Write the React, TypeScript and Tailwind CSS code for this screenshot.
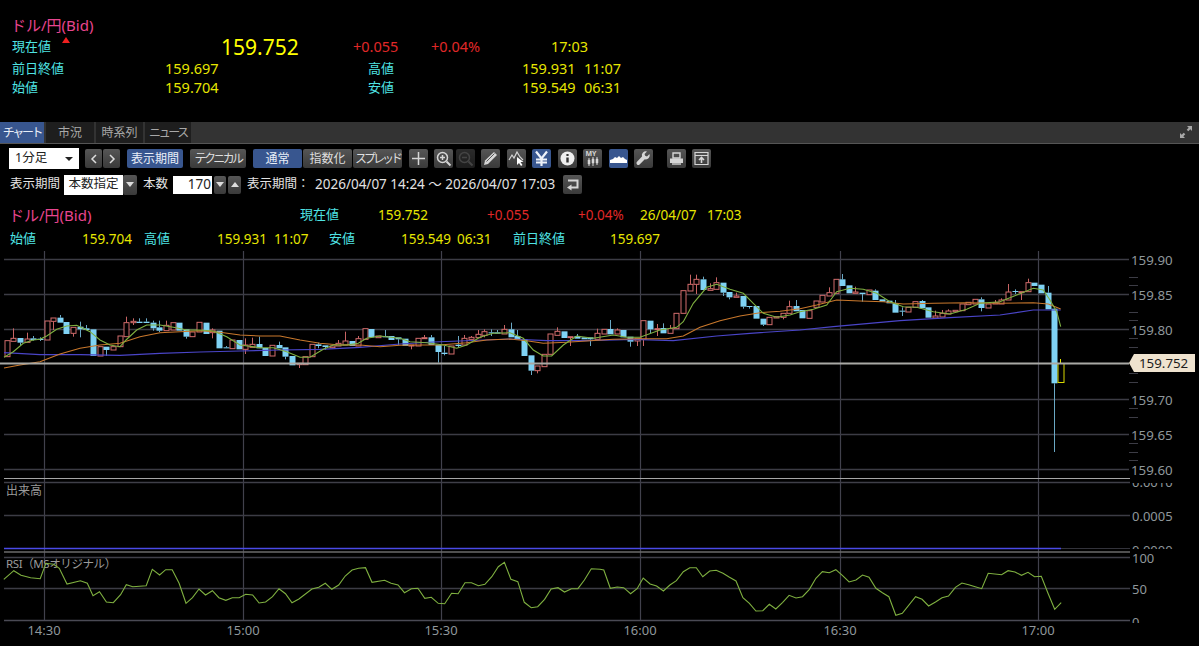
import type { ReactNode } from "react";

const FONT = { fontFamily: '"Noto Sans", "Noto Sans CJK JP", sans-serif' };

// [0 = 陽線 / 1 = 陰線, body top, body bottom, high, low] (zoomed px, y = 250 + v / 3)
const CANDLES: number[][] = [
  [0,272,320,0,0],[0,265,274,235,0],[1,264,278,0,288],[0,267,277,248,0],[1,265,270,258,272],[1,266,270,262,273],
  [0,213,270,0,0],[0,204,214,0,240],[1,203,218,195,0],[1,216,252,0,0],[0,232,250,0,260],[1,230,238,215,262],
  [1,235,240,225,0],[1,238,318,0,0],[0,290,318,0,0],[1,290,300,0,318],[0,290,300,0,0],[0,258,290,0,0],
  [0,218,260,200,0],[0,214,218,205,225],[1,215,219,205,0],[1,215,219,205,0],[1,218,235,212,242],[1,232,242,212,246],
  [0,226,242,212,0],[0,218,240,0,0],[1,218,242,0,0],[1,238,260,0,266],[0,246,260,0,0],[0,217,246,0,0],
  [1,218,252,0,0],[0,240,248,235,265],[1,242,295,0,0],[1,292,295,288,0],[0,270,296,0,0],[1,270,298,0,0],
  [0,285,298,265,312],[0,283,292,263,0],[1,282,295,260,0],[1,294,318,0,0],[0,286,318,0,0],[1,285,295,275,0],
  [1,292,320,0,328],[1,318,346,0,0],[0,340,344,0,354],[0,320,344,0,0],[0,283,320,0,0],[1,283,288,278,295],
  [1,286,291,0,300],[0,288,293,0,295],[0,280,288,270,0],[0,273,285,245,0],[1,273,288,0,0],[0,266,288,258,0],
  [0,236,268,0,0],[1,237,262,0,0],[0,258,263,0,0],[1,258,262,240,0],[1,258,270,0,0],[1,262,268,0,285],
  [1,266,288,0,0],[0,285,287,0,298],[0,265,288,0,0],[0,263,266,255,0],[1,262,285,255,0],[1,285,306,0,338],
  [1,308,312,288,316],[0,288,312,0,0],[1,284,288,258,292],[0,265,285,255,0],[0,262,268,258,0],[0,253,263,240,0],
  [0,245,256,238,262],[1,247,250,238,258],[1,247,251,240,0],[0,238,252,225,0],[1,238,262,218,0],[1,258,268,240,0],
  [1,268,318,0,0],[1,316,362,0,375],[0,348,362,0,370],[0,313,350,0,0],[0,252,313,0,0],[0,244,256,232,0],
  [1,244,264,0,0],[0,260,262,0,288],[1,258,266,252,0],[1,262,268,0,0],[1,262,268,0,288],[0,250,268,236,0],
  [0,238,252,0,0],[1,237,253,210,0],[0,240,252,235,0],[1,240,262,0,0],[1,260,275,0,290],[0,265,273,0,288],
  [0,212,268,0,288],[1,212,238,0,250],[0,236,238,222,258],[1,234,250,220,0],[0,236,250,225,0],[0,190,236,0,0],
  [0,122,190,0,0],[0,103,123,74,0],[0,88,103,74,132],[1,88,120,80,0],[0,116,121,100,0],[0,98,118,82,0],
  [1,98,128,0,138],[1,126,142,0,148],[0,138,142,128,0],[1,138,170,0,176],[1,168,170,0,176],[1,168,206,0,0],
  [1,206,224,0,228],[0,202,224,0,0],[0,200,204,0,0],[0,190,202,0,208],[0,170,190,152,0],[1,168,184,150,0],
  [1,180,205,0,0],[0,182,205,0,0],[0,153,172,0,0],[0,136,156,0,0],[0,128,138,112,0],[0,88,130,0,0],
  [1,88,108,72,0],[1,106,130,0,0],[0,126,130,110,0],[1,128,132,0,155],[0,120,134,0,0],[1,122,150,118,0],
  [1,148,155,0,0],[1,152,160,0,0],[1,160,188,150,0],[1,182,184,172,198],[0,172,186,0,0],[0,155,172,0,0],
  [1,153,175,150,0],[1,172,203,0,0],[0,198,204,182,0],[0,190,201,180,0],[0,183,192,178,0],[0,181,185,0,0],
  [0,162,182,0,0],[0,157,164,0,0],[0,148,162,0,0],[1,148,174,142,184],[0,162,174,0,0],[0,158,162,150,0],
  [0,150,162,145,0],[0,126,150,102,0],[1,123,126,118,132],[0,125,127,0,150],[0,98,125,86,0],[1,98,108,0,0],
  [1,104,130,0,0],[1,128,178,108,0],[1,176,400,0,606],
];

const toPts = (p: number[][], dx: number, sx = 3) =>
  p.map(([x, y]) => `${(dx + x / sx).toFixed(1)},${(y / 3 + 250).toFixed(1)}`).join(" ");

const GREEN =
  toPts([[12,322],[40,305],[70,280],[100,270],[120,268],[140,258],[170,238],[200,228],[230,226],[270,245],[300,270],[330,285],[360,290],[378,270],[410,240],[440,225],[480,225],[520,232],[560,240],[600,240],[640,243],[680,260],[720,285],[780,293],[820,293],[860,305],[900,322],[930,322],[970,298],[1000,285],[1040,285],[1075,280],[1100,265],[1140,258],[1200,265]], 0) + " " +
  toPts([[30,275],[80,278],[130,285],[170,295],[200,285],[240,262],[280,250],[330,248],[370,265],[400,300],[430,318],[455,318],[490,285],[530,258],[580,265],[640,255],[680,262],[720,262],[780,240],[830,232],[850,215],[880,160],[920,112],[950,103],[990,118],[1030,130],[1060,160],[1090,190],[1130,202],[1170,195],[1200,185]], 400) + " " +
  toPts([[40,178],[80,165],[110,125],[150,115],[190,118],[230,130],[270,155],[310,170],[350,172],[400,185],[450,192],[500,178],[540,160],[600,155],[650,135],[700,115],[730,120],[750,150],[770,185],[782,230]], 800);

const ORANGE =
  toPts([[12,354],[60,345],[120,335],[180,312],[240,295],[300,285],[360,280],[420,260],[480,248],[540,245],[600,242],[660,247],[720,255],[780,258],[840,258],[900,270],[960,280],[1020,285],[1080,285],[1140,290],[1200,286]], 0) + " " +
  toPts([[60,285],[120,285],[200,278],[260,270],[330,267],[380,272],[430,280],[500,277],[570,272],[640,268],[720,266],[800,266],[850,258],[900,232],[960,212],[1020,198],[1080,188],[1140,184],[1200,176]], 400) + " " +
  toPts([[50,165],[110,150],[180,153],[250,155],[310,162],[400,160],[500,158],[600,160],[700,158],[745,162],[782,177]], 800);

const BLUE =
  toPts([[12,308],[120,314],[240,314],[360,316],[480,310],[600,306],[720,303],[840,300],[960,298],[1080,292],[1200,282]], 0) + " " +
  toPts([[100,276],[330,267],[440,272],[560,272],[700,268],[820,272],[950,258],[1050,250],[1200,240]], 400) + " " +
  toPts([[100,230],[300,212],[450,203],[600,195],[700,180],[782,180]], 800);

const RSI =
  toPts([[10,328],[36,302],[55,316],[80,323],[105,326],[120,280],[140,283],[155,295],[175,342],[210,332],[228,340],[243,377],[260,365],[278,396],[296,398],[315,374],[330,344],[347,350],[382,347],[398,298],[417,315],[433,299],[450,299],[468,340],[486,400],[503,383],[520,357],[537,375],[555,362],[572,383],[590,391],[607,383],[625,383],[642,373],[660,375],[677,399],[694,396],[712,380],[729,356],[746,371],[763,398],[781,387],[815,357],[833,352],[850,340],[867,358],[885,345],[902,318],[920,300],[937,295],[955,293],[972,337],[1005,331],[1022,340],[1040,345],[1057,368],[1075,356],[1092,355],[1110,385],[1127,382],[1145,400],[1162,401],[1180,370],[1197,371],[1215,338],[1232,338],[1250,347],[1267,343],[1285,320],[1302,290],[1318,277],[1335,328],[1353,335],[1370,397],[1388,413],[1405,410],[1423,388],[1440,357],[1458,353],[1475,366],[1493,356],[1510,356],[1527,330],[1545,296]].map(([x, y]) => [x, y + 660]), 0, 2.613) + " " +
  toPts([[0,298],[10,300],[27,355],[45,351],[62,353],[80,371],[97,356],[113,324],[131,342],[148,348],[166,363],[183,345],[200,332],[218,305],[235,293],[252,293],[269,320],[287,303],[304,301],[322,310],[339,322],[356,333],[374,383],[391,400],[408,423],[426,422],[443,403],[460,417],[478,397],[495,376],[513,384],[530,380],[548,358],[565,325],[582,305],[600,308],[617,299],[635,317],[652,336],[670,330],[687,315],[704,322],[722,355],[739,368],[756,380],[774,436],[791,430],[826,380],[843,388],[860,408],[878,396],[895,383],[912,378],[930,352],[947,339],[965,344],[982,350],[999,356],[1016,310],[1051,314],[1068,302],[1086,306],[1103,316],[1120,307],[1137,320],[1155,319],[1172,368],[1190,418],[1207,398]].map(([x, y]) => [x, y + 660]), 600, 2.617);

const PRICE_LINES: [number, string][] = [[259, "159.90"], [294, "159.85"], [329, "159.80"], [399, "159.70"], [434, "159.65"], [469, "159.60"]];
const TIMES: [number, string][] = [[44, "14:30"], [243, "15:00"], [441, "15:30"], [640, "16:00"], [840, "16:30"], [1038, "17:00"]];
const MINOR = [277, 285, 312, 320, 338, 347, 373, 382, 408, 417, 443, 452, 460];

function Chart() {
  return (
    <svg viewBox="0 251 1199 395" className="block w-[1199px] h-[395px]" style={FONT}>
      {TIMES.map(([x]) => (
        <line key={x} x1={x + 0.5} x2={x + 0.5} y1={251} y2={620} stroke="#41414c" strokeWidth={1.2} />
      ))}
      {PRICE_LINES.map(([y]) => (
        <line key={y} x1={4} x2={1129} y1={y + 0.5} y2={y + 0.5} stroke="#3c3c45" strokeWidth={1.3} />
      ))}
      {MINOR.map((y) => (
        <line key={y} x1={1129} x2={1138} y1={y + 0.5} y2={y + 0.5} stroke="#3c3c45" />
      ))}
      {PRICE_LINES.map(([y, t]) => (
        <text key={t} x={1131} y={y + 5.5} fontSize={13.3} fill="#8f979b">{t}</text>
      ))}

      {CANDLES.map(([k, top, bot, hi, lo], i) => {
        const x = Math.round(6.8 + 6.63 * i) + 0.5;
        const t = 250 + top / 3;
        const b = 250 + bot / 3;
        const wick = k ? "#6aa8c4" : "#c86464";
        return (
          <g key={i}>
            {hi > 0 && <line x1={x} x2={x} y1={250 + hi / 3} y2={t} stroke={wick} />}
            {lo > 0 && <line x1={x} x2={x} y1={b} y2={250 + lo / 3} stroke={wick} />}
            {k ? (
              <rect x={x - 3} y={t} width={6} height={Math.max(b - t, 1)} fill="#7fd2f4" />
            ) : (
              <rect x={x - 2.5} y={t} width={5} height={Math.max(b - t, 1)} fill="#000" stroke="#d26c6c" />
            )}
          </g>
        );
      })}
      <line x1={1060.5} x2={1060.5} y1={359} y2={363} stroke="#e8e800" />
      <rect x={1058} y={363.5} width={6} height={19} fill="#000" stroke="#d8d800" />

      <polyline points={BLUE} fill="none" stroke="#4a45c8" strokeWidth={1.2} />
      <polyline points={ORANGE} fill="none" stroke="#c9782c" strokeWidth={1.1} />
      <polyline points={GREEN} fill="none" stroke="#7fb040" strokeWidth={1.1} />

      <line x1={0} x2={1129} y1={363.5} y2={363.5} stroke="#a9a9a5" strokeWidth={2} />
      <polygon points="1129,363 1134,354 1195,354 1195,372 1134,372" fill="#efe3cf" />
      <text x={1139} y={368} fontSize={13.3} fill="#1c1c1c">159.752</text>

      {/* 出来高 */}
      <text x={1132} y={487} fontSize={13} fill="#8f979b">0.0010</text>
      <rect x={1130} y={477} width={69} height={6} fill="#000" />
      <line x1={4} x2={1130} y1={478.5} y2={478.5} stroke="#a5a5a5" strokeWidth={1.2} />
      <line x1={4} x2={1130} y1={482.5} y2={482.5} stroke="#3f3f48" strokeWidth={1.3} />
      <line x1={4} x2={1130} y1={515.5} y2={515.5} stroke="#3c3c45" strokeWidth={1.3} />
      <text x={1132} y={521} fontSize={13} fill="#8f979b">0.0005</text>
      <text x={6} y={495} fontSize={12} fill="#9a9a9a">出来高</text>
      <text x={1132} y={555} fontSize={13} fill="#8f979b">0.0000</text>
      <rect x={1130} y={549} width={69} height={7} fill="#000" />
      <line x1={4} x2={1130} y1={548.5} y2={548.5} stroke="#33333b" />
      <line x1={4} x2={1061} y1={548.5} y2={548.5} stroke="#4a4ae6" strokeWidth={1.5} />
      <line x1={4} x2={1130} y1={552} y2={552} stroke="#6b6b6b" strokeWidth={1.6} />

      {/* RSI */}
      <line x1={4} x2={1130} y1={557.5} y2={557.5} stroke="#3f3f48" strokeWidth={1.3} />
      <line x1={4} x2={1130} y1={588.5} y2={588.5} stroke="#3c3c45" strokeWidth={1.3} />
      <line x1={4} x2={1130} y1={620.5} y2={620.5} stroke="#4a4a54" strokeWidth={1.3} />
      <text x={1132} y={563} fontSize={13} fill="#8f979b">100</text>
      <text x={1132} y={594} fontSize={13} fill="#8f979b">50</text>
      <text x={1132} y={627} fontSize={13} fill="#8f979b">0</text>
      <rect x={1130} y={623} width={69} height={6} fill="#000" />
      <text x={6} y={568} fontSize={11.5} letterSpacing={-0.4} fill="#9a9a9a">RSI（MSオリジナル）</text>
      <polyline points={RSI} fill="none" stroke="#7fb040" strokeWidth={1.1} />

      {TIMES.map(([x, t]) => (
        <text key={t} x={x} y={635} fontSize={13} fill="#8f979b" textAnchor="middle">{t}</text>
      ))}
    </svg>
  );
}

function Btn({ children, on, className }: { children: ReactNode; on?: boolean; className: string }) {
  return (
    <div
      className={`flex items-center justify-center rounded-[2px] text-[12px] whitespace-nowrap ${
        on ? "bg-[#38568f] text-[#e8eef8]" : "bg-gradient-to-b from-[#565656] to-[#3a3a3a] text-[#dedede]"
      } ${className}`}
    >
      {children}
    </div>
  );
}

function Icon({ children, on, className = "" }: { children: ReactNode; on?: boolean; className?: string }) {
  return (
    <Btn on={on} className={`w-[19px] h-[19px] ${className}`}>
      <svg viewBox="0 0 19 19" className="w-[19px] h-[19px]" fill="none" stroke="#d6d6d6" strokeWidth={1.5}>
        {children}
      </svg>
    </Btn>
  );
}

export default function App() {
  return (
    <div className="w-[1199px] h-[646px] overflow-hidden bg-black text-[13px]" style={FONT}>
      {/* 銘柄ヘッダ */}
      <div className="h-[122px] pt-[14px] pl-[12px] text-[#4fe3e3]">
        <div className="h-[22px] -ml-[1px] text-[15px] leading-[22px] text-[#e8458f]">ドル/円(Bid)</div>
        <div className="flex items-center h-[22px]">
          <div className="relative w-[209px]">
            現在値
            <span className="absolute left-[50px] top-0 w-0 h-0 border-x-[4px] border-x-transparent border-b-[6px] border-b-[#f02020]" />
          </div>
          <div className="w-[132px] text-[21px] leading-[22px] text-[#ffff00]">159.752</div>
          <div className="w-[78px] text-[14.5px] text-[#e02828]">+0.055</div>
          <div className="w-[120px] text-[14.5px] text-[#e02828]">+0.04%</div>
          <div className="text-[14.5px] text-[#e6e600]">17:03</div>
        </div>
        <div className="flex items-center h-[19px] mt-[1px]">
          <div className="w-[153px]">前日終値</div>
          <div className="w-[203px] text-[14.5px] text-[#e6e600]">159.697</div>
          <div className="w-[154px]">高値</div>
          <div className="w-[62px] text-[14.5px] text-[#e6e600]">159.931</div>
          <div className="text-[14.5px] text-[#e6e600]">11:07</div>
        </div>
        <div className="flex items-center h-[19px]">
          <div className="w-[153px]">始値</div>
          <div className="w-[203px] text-[14.5px] text-[#e6e600]">159.704</div>
          <div className="w-[154px]">安値</div>
          <div className="w-[62px] text-[14.5px] text-[#e6e600]">159.549</div>
          <div className="text-[14.5px] text-[#e6e600]">06:31</div>
        </div>
      </div>

      {/* タブ */}
      <div className="flex items-stretch h-[22px] gap-[2px] bg-[#333] border-b border-[#555] text-[12px] whitespace-nowrap">
        <div className="w-[44px] flex items-center justify-center bg-[#38568f] text-[#e8eef8] tracking-[-2.4px]">チャート</div>
        <div className="w-[48px] flex items-center justify-center bg-[#1e1e1e] text-[#a8a8a8]">市況</div>
        <div className="w-[47px] flex items-center justify-center bg-[#1e1e1e] text-[#a8a8a8]">時系列</div>
        <div className="w-[46px] flex items-center justify-center bg-[#1e1e1e] text-[#a8a8a8] tracking-[-2.4px]">ニュース</div>
        <svg viewBox="0 0 14 14" className="ml-auto mr-[6px] mt-[3px] w-[14px] h-[14px]" fill="#a8a8a8">
          <path d="M8 1h5v5l-1.7-1.7-2 2-1.6-1.6 2-2zM6 13H1V8l1.7 1.7 2-2 1.6 1.6-2 2z" />
        </svg>
      </div>

      {/* ツールバー 1段目 */}
      <div className="flex items-center h-[21px] mt-[4px] pl-[9px]">
        <div className="flex items-center justify-between w-[70px] h-[21px] px-[6px] bg-white text-[12.5px] text-[#222]">
          1分足
          <span className="w-0 h-0 border-x-[4px] border-x-transparent border-t-[4px] border-t-[#222]" />
        </div>
        <Btn className="ml-[6px] w-[17px] h-[19px] text-[#ddd]">
          <svg viewBox="0 0 10 12" className="w-[10px] h-[12px]" fill="none" stroke="#ddd" strokeWidth={1.5}><path d="M7 2 3 6l4 4" /></svg>
        </Btn>
        <Btn className="ml-[1px] w-[17px] h-[19px] text-[#ddd]">
          <svg viewBox="0 0 10 12" className="w-[10px] h-[12px]" fill="none" stroke="#ddd" strokeWidth={1.5}><path d="m3 2 4 4-4 4" /></svg>
        </Btn>
        <Btn on className="ml-[7px] w-[56px] h-[19px]">表示期間</Btn>
        <Btn className="ml-[7px] w-[56px] h-[19px] tracking-[-2.6px]">テクニカル</Btn>
        <Btn on className="ml-[7px] w-[49px] h-[19px]">通常</Btn>
        <Btn className="ml-[1px] w-[49px] h-[19px]">指数化</Btn>
        <Btn className="ml-[1px] w-[49px] h-[19px] tracking-[-3px]">スプレッド</Btn>

        <Icon className="ml-[7px]"><path d="M9.5 3v13M3 9.5h13" /></Icon>
        <Icon className="ml-[6px]">
          <circle cx="8.5" cy="8.5" r="5" /><path d="M8.5 6v5M6 8.5h5" /><path d="m12.5 12.5 4 4" strokeWidth={2} />
        </Icon>
        <Icon className="ml-[3px] opacity-50">
          <circle cx="8.5" cy="8.5" r="5" stroke="#888" /><path d="M6 8.5h5" stroke="#888" /><path d="m12.5 12.5 4 4" stroke="#888" strokeWidth={2} />
        </Icon>
        <Icon className="ml-[6px]">
          <path d="M3 16l1-4.5L13 3l3 3-9 9z" fill="#d6d6d6" stroke="none" /><path d="m5.5 12.5 8-8" stroke="#555" strokeWidth={1} />
        </Icon>
        <Icon className="ml-[7px]">
          <path d="m2 11 3-5 2 3 3-6 3 5 3 3" strokeWidth={1.2} /><path d="m10 8 0 8 2-2 2 3 1.5-1-2-3h3z" fill="#fff" stroke="none" />
        </Icon>
        <Icon on className="ml-[6px]">
          <path d="m4 2.5 5.5 7 5.5-7M9.5 9.5V17M4 10.5h11M4 13.5h11" stroke="#eef2fa" strokeWidth={2.2} />
        </Icon>
        <Icon className="ml-[7px]">
          <circle cx="9.5" cy="9.5" r="7" fill="#eee" stroke="none" />
          <path d="M9.5 8.5v5" stroke="#333" strokeWidth={2.4} /><path d="M9.5 5v2" stroke="#333" strokeWidth={2.2} />
        </Icon>
        <Icon className="ml-[6px]">
          <text x="2.5" y="7" fontSize="7" fontWeight="700" fill="#d6d6d6" stroke="none">MY</text>
          <path d="M6 9v8M10 8v9M14 8v8" strokeWidth={1} /><path d="M5 11h2v4H5zM9 10h2v4H9zM13 10h2v4h-2z" fill="#d6d6d6" strokeWidth={0.5} />
        </Icon>
        <Icon on className="ml-[7px]">
          <path d="M1 14V11l3-1 2-2 2 1 2-2 2 2 2-1 2 2 2 1v3z" fill="#fff" stroke="none" />
        </Icon>
        <Icon className="ml-[6px]">
          <path d="M15.5 5 13 7.5l-1.8-.7-.7-1.8L13 2.5A4 4 0 0 0 8 7.5l-5 5.3a1.8 1.8 0 0 0 2.6 2.6l5.2-5.1a4 4 0 0 0 4.7-5.3z" fill="#d6d6d6" stroke="none" />
        </Icon>
        <Icon className="ml-[14px]">
          <path d="M6 4h7v5H6z" strokeWidth={1.4} /><path d="M3 9.5h13v4.5H3z" fill="#d6d6d6" stroke="none" /><path d="M5 15h9" strokeWidth={1.4} />
        </Icon>
        <Icon className="ml-[6px]">
          <path d="M3 3.5h13v12H3zM3 6.5h13" strokeWidth={1.2} /><path d="M9.5 14V9M7 11l2.5-2.5L12 11" strokeWidth={1.6} />
        </Icon>
      </div>

      {/* ツールバー 2段目 */}
      <div className="flex items-center h-[21px] mt-[5px] pl-[10px] text-[12.5px] text-[#e2e2e2]">
        <div className="w-[54px]">表示期間</div>
        <div className="flex items-center w-[59px] h-[20px] justify-center bg-white text-[#222]">本数指定</div>
        <Btn className="w-[14px] h-[20px]">
          <span className="w-0 h-0 border-x-[4px] border-x-transparent border-t-[5px] border-t-[#ddd]" />
        </Btn>
        <div className="ml-[6px] w-[30px]">本数</div>
        <div className="flex items-center justify-end w-[39px] h-[18px] pr-[1px] bg-white text-[13.5px] text-[#222]">170</div>
        <Btn className="ml-[2px] w-[12px] h-[18px]">
          <span className="w-0 h-0 border-x-[4px] border-x-transparent border-t-[5px] border-t-[#ddd]" />
        </Btn>
        <Btn className="ml-[2px] w-[13px] h-[18px]">
          <span className="w-0 h-0 border-x-[4px] border-x-transparent border-b-[5px] border-b-[#ddd]" />
        </Btn>
        <div className="ml-[6px] w-[68px]">表示期間：</div>
        <div className="w-[249px] text-[13.5px] whitespace-nowrap">2026/04/07 14:24 ～ 2026/04/07 17:03</div>
        <Icon className="-ml-[1px]">
          <path d="M5 5.5h9.5v7H6" strokeWidth={2} /><path d="M8.5 9.5 4 12.5l4.5 3z" fill="#d6d6d6" stroke="none" />
        </Icon>
      </div>

      {/* チャート見出し */}
      <div className="flex items-center h-[22px] mt-[9px] pl-[9px] text-[#4fe3e3]">
        <div className="w-[291px] text-[15px] text-[#e8458f]">ドル/円(Bid)</div>
        <div className="w-[78px]">現在値</div>
        <div className="w-[109px] text-[13.5px] text-[#e6e600]">159.752</div>
        <div className="w-[91px] text-[13.5px] text-[#e02828]">+0.055</div>
        <div className="w-[62px] text-[13.5px] text-[#e02828]">+0.04%</div>
        <div className="w-[67px] text-[13.5px] text-[#e6e600]">26/04/07</div>
        <div className="text-[13.5px] text-[#e6e600]">17:03</div>
      </div>
      <div className="flex items-center h-[20px] mt-[3px] mb-[2px] pl-[10px] text-[#4fe3e3]">
        <div className="w-[72px]">始値</div>
        <div className="w-[62px] text-[13.5px] text-[#e6e600]">159.704</div>
        <div className="w-[73px]">高値</div>
        <div className="w-[57px] text-[13.5px] text-[#e6e600]">159.931</div>
        <div className="w-[55px] text-[13.5px] text-[#e6e600]">11:07</div>
        <div className="w-[72px]">安値</div>
        <div className="w-[56px] text-[13.5px] text-[#e6e600]">159.549</div>
        <div className="w-[56px] text-[13.5px] text-[#e6e600]">06:31</div>
        <div className="w-[97px]">前日終値</div>
        <div className="text-[13.5px] text-[#e6e600]">159.697</div>
      </div>

      <Chart />
    </div>
  );
}
